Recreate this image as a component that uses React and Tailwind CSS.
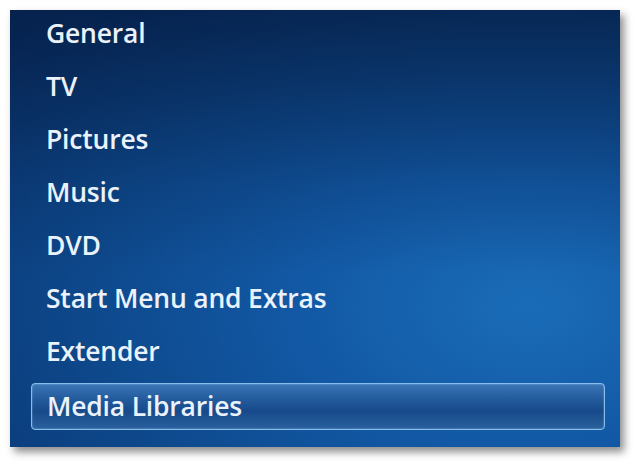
const items = [
  "General",
  "TV",
  "Pictures",
  "Music",
  "DVD",
  "Start Menu and Extras",
  "Extender",
];

export default function App() {
  return (
    <div className="w-[638px] h-[466px] bg-white pl-[10px] pt-[10px] font-['Open_Sans',sans-serif]">
      <div className="w-[610px] h-[437px] shadow-[4px_5px_8px_rgba(0,0,0,0.45)] bg-[linear-gradient(to_bottom,rgba(3,20,52,0.6)_0%,rgba(3,20,52,0.15)_40%,rgba(3,20,52,0)_60%),radial-gradient(ellipse_110%_95%_at_85%_68%,#1a6cb8_0%,#1258a4_35%,#0d4688_70%,#0a3672_100%)] flex flex-col">
        <div className="-mt-[3px]">
          {items.map((label) => (
            <div
              key={label}
              className="h-[53px] flex items-center pl-[36px] text-[26.5px] font-semibold tracking-[-0.2px] text-[#eaf2fb]"
            >
              {label}
            </div>
          ))}
        </div>
        <div className="ml-[21px] mr-[15px] mt-[5px] h-[47px] rounded-[4px] border-[1.5px] border-[#86bdeb] bg-[linear-gradient(to_bottom,#3a76b6_0%,#225a9c_35%,#174a8a_60%,#2a609e_100%)] shadow-[inset_0_0_2px_rgba(180,220,255,0.6)] flex items-center pl-[15px] text-[26.5px] font-semibold tracking-[-0.2px] text-[#eaf2fb]">
          Media Libraries
        </div>
      </div>
    </div>
  );
}
